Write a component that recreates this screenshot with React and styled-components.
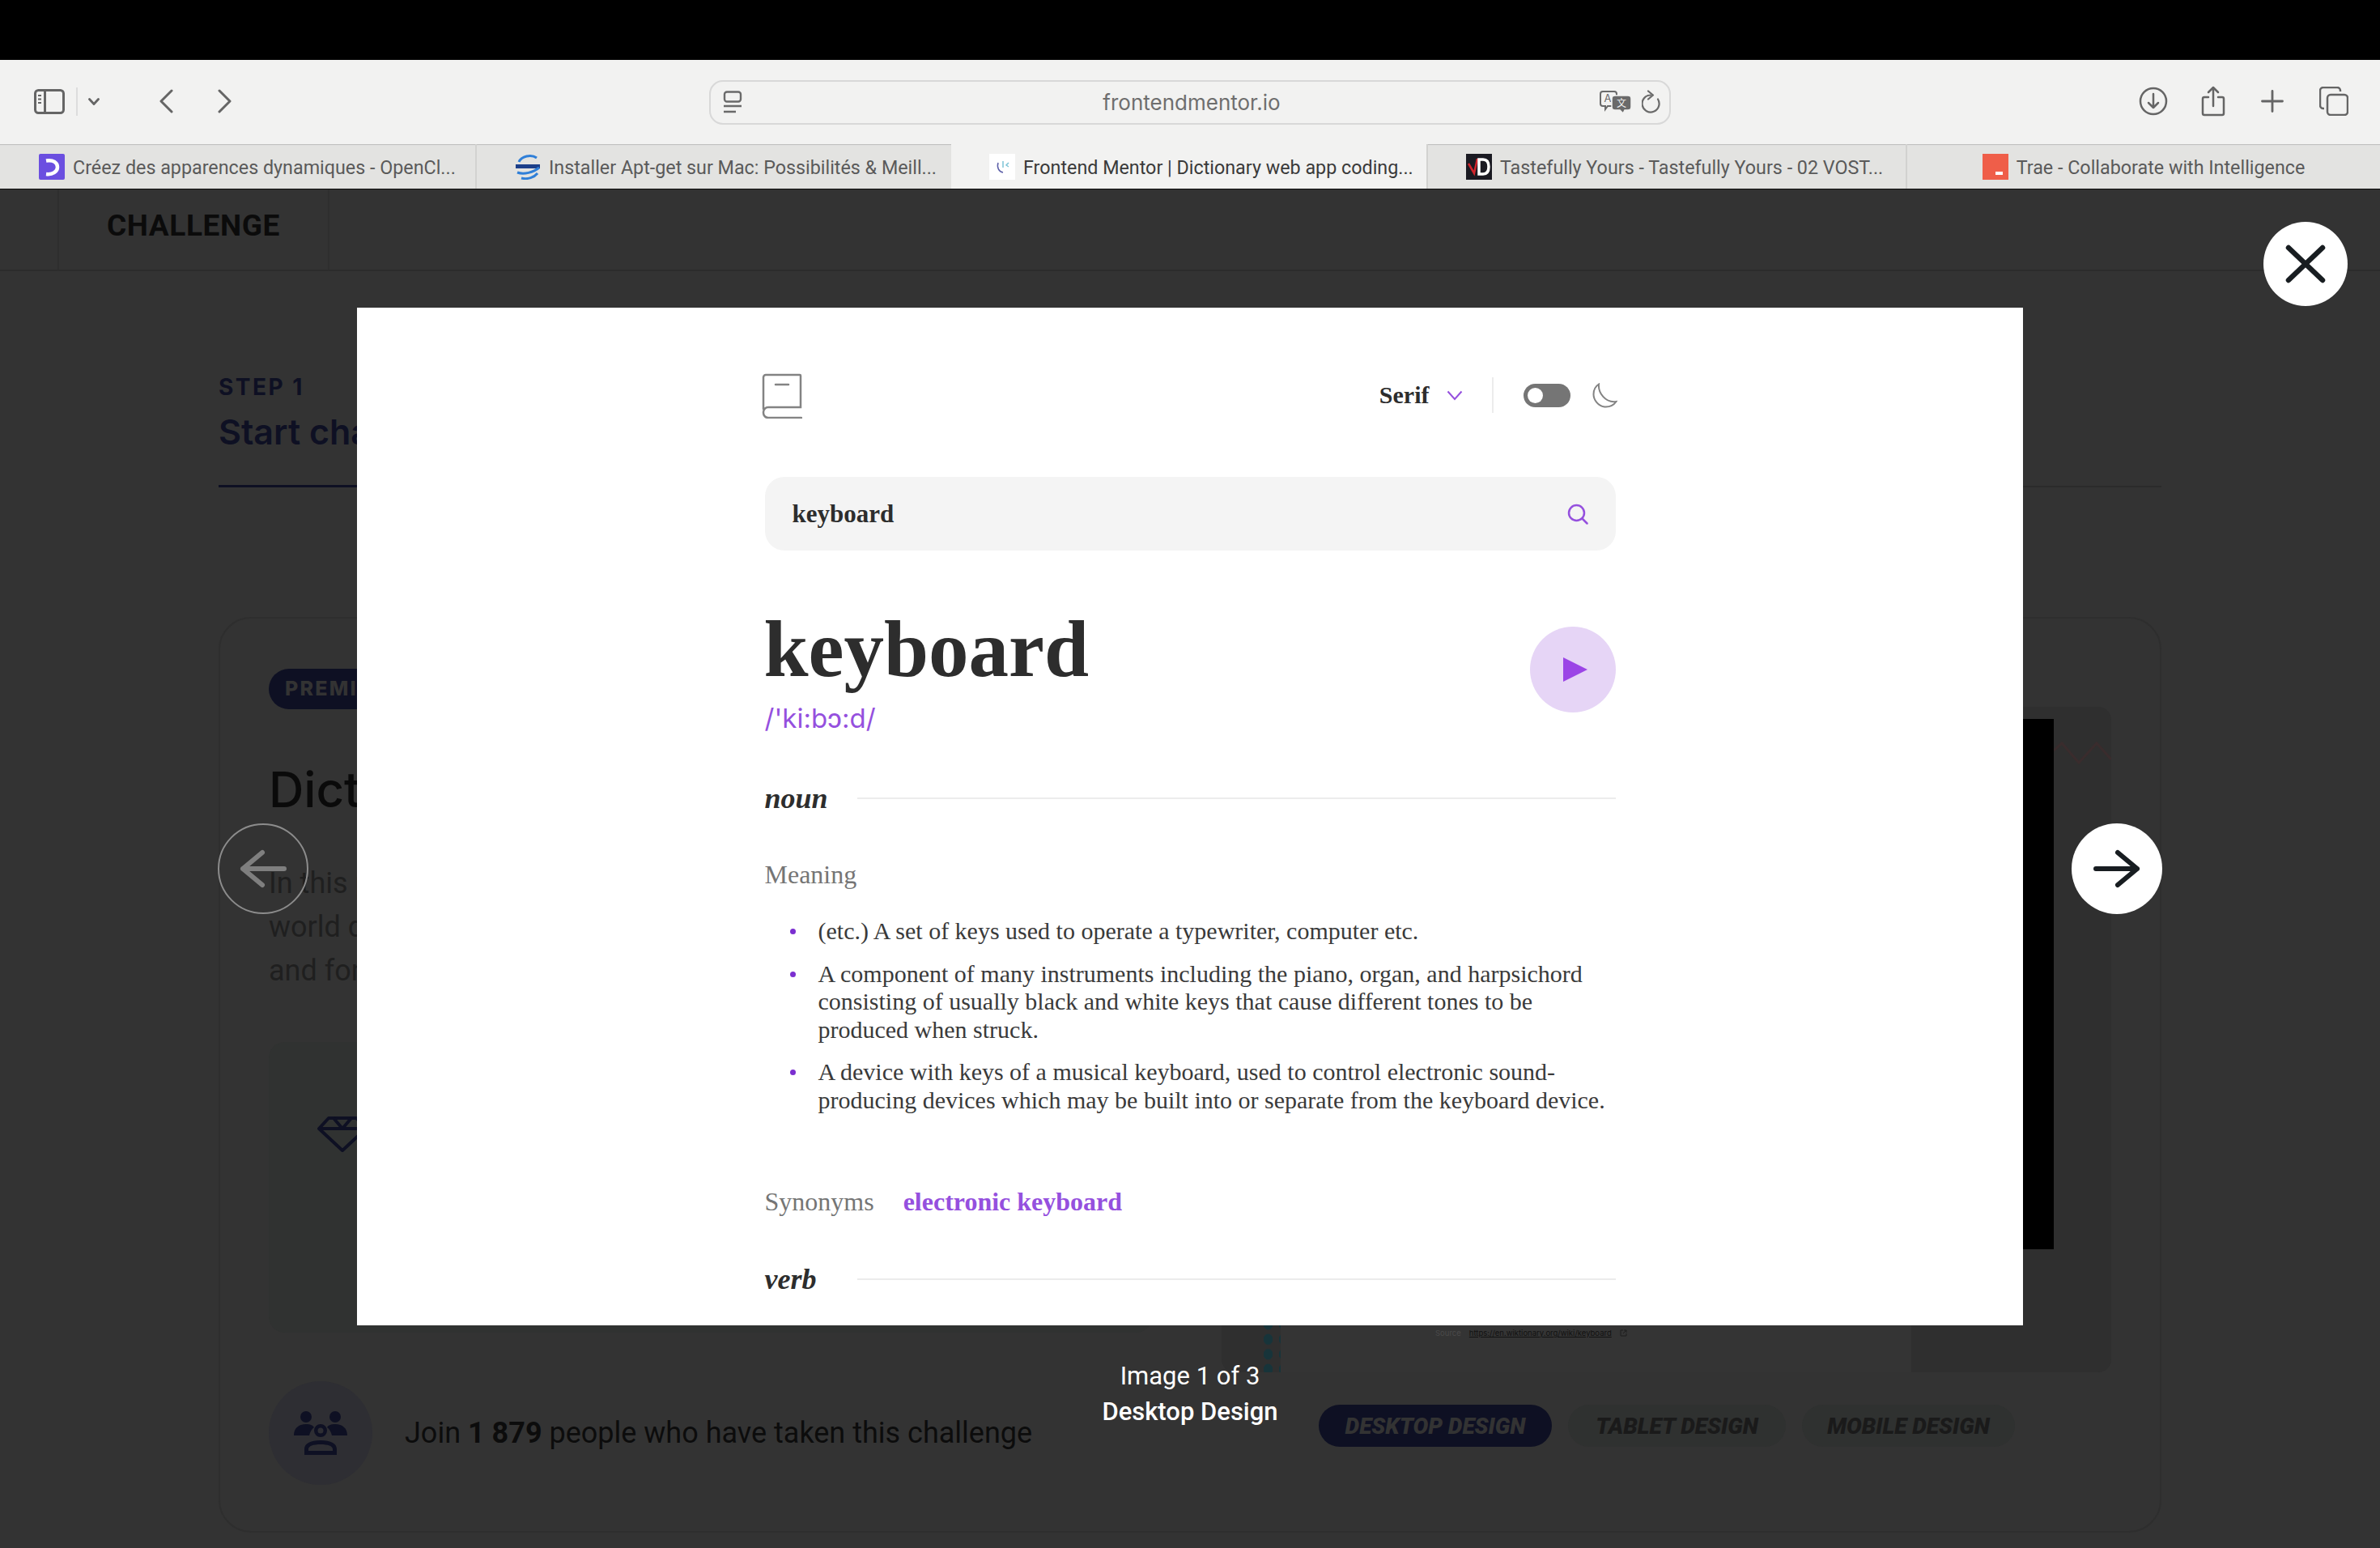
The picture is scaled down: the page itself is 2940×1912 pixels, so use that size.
import React from "react";
import styled, { createGlobalStyle } from "styled-components";

const GlobalStyle = createGlobalStyle`
  html, body {
    margin: 0;
    padding: 0;
    background: #333333;
    overflow: hidden;
  }
  * {
    box-sizing: border-box;
  }
`;

const SANS = `Inter, "Liberation Sans", sans-serif`;
const SERIF = `"Liberation Serif", serif`;
const PURPLE = "#9550de";
const NAVY = "#0e1023";

const Page = styled.div`
  width: 2940px;
  height: 1912px;
  display: flex;
  flex-direction: column;
  font-family: ${SANS};
`;

const TopStrip = styled.div`
  height: 74px;
  background: #000;
`;

const Toolbar = styled.header`
  height: 104px;
  background: #f2f2f1;
  display: grid;
  grid-template-columns: 876px 1188px 1fr;
  align-items: center;
`;

const ToolLeft = styled.div`
  display: flex;
  align-items: center;
  padding-left: 42px;
  margin-top: -2px;
  color: #656565;
`;

const Split = styled.span`
  width: 2px;
  height: 35px;
  background: #dddddd;
  margin: 0 13px 0 14px;
`;

const BackIcon = styled.svg`
  margin-left: ${(p) => p.$gap}px;
  display: block;
`;

const UrlBar = styled.div`
  height: 55px;
  border: 2px solid #d8d8d8;
  border-radius: 17px;
  display: flex;
  align-items: center;
  padding: 0 10px 0 15px;
  color: #6a6a6a;
`;

const UrlText = styled.span`
  flex: 1;
  text-align: center;
  font-size: 26px;
  color: #6e6e6e;
  padding-left: 51px;
`;

const ReloadIcon = styled.svg`
  margin-left: 12px;
`;

const ToolRight = styled.div`
  display: flex;
  align-items: center;
  justify-content: flex-end;
  gap: 44px;
  padding-right: 39px;
  margin-top: -2px;
  color: #656565;
  svg:first-child {
    margin-right: -3px;
  }
`;

const TabRow = styled.nav`
  height: 56px;
  display: grid;
  grid-template-columns: 587px 588px 587px 592px 586px;
  border-bottom: 1px solid #0c0c0c;
`;

const Tab = styled.div`
  background: ${(p) => (p.$active ? "#f2f2f1" : "#e3e3e1")};
  box-shadow: ${(p) => (p.$active ? "none" : "inset 0 2px 1px -1px #bdbdbd")};
  border-left: ${(p) => (p.$first || p.$active ? "none" : "2px solid #d2d2d0")};
  display: flex;
  align-items: center;
  justify-content: ${(p) => (p.$center ? "center" : "flex-start")};
  gap: 10px;
  padding-left: ${(p) => (p.$center ? 0 : p.$first ? 48 : 47)}px;
`;

const TabTitle = styled.span`
  font-family: Roboto, sans-serif;
  font-size: 23.3px;
  margin-top: 3px;
  white-space: nowrap;
  color: ${(p) => (p.$active ? "#3a3a3a" : "#5a5a5a")};
`;

const Stage = styled.main`
  position: relative;
  height: 1678px;
  background: #333333;
  overflow: hidden;
`;

const SiteNav = styled.div`
  height: 101px;
  padding-left: 71px;
  border-bottom: 2px solid #2c2c2c;
  display: flex;
`;

const NavCell = styled.div`
  width: 336px;
  border-left: 2px solid #2e2e2e;
  border-right: 2px solid #2e2e2e;
  padding: 0 0 10px 59px;
  display: flex;
  align-items: center;
  font-family: Roboto, sans-serif;
  font-size: 37px;
  font-weight: 700;
  letter-spacing: 0.6px;
  color: #0b0b0b;
`;

const StepBar = styled.div`
  margin: 0 270px;
  height: 267px;
  border-bottom: 2px solid #2b2b2b;
`;

const ActiveStep = styled.div`
  width: 560px;
  height: 267px;
  border-bottom: 3px solid ${NAVY};
  padding-top: 128px;
  color: ${NAVY};
`;

const StepLabel = styled.div`
  font-size: 28px;
  font-weight: 700;
  letter-spacing: 2.5px;
  line-height: 30px;
`;

const StepTitle = styled.div`
  font-size: 43px;
  font-weight: 600;
  line-height: 54px;
  margin-top: 13px;
  white-space: nowrap;
`;

const Card = styled.section`
  margin: 160px 270px 0;
  height: 1131px;
  border: 2px solid #2e2e2e;
  border-radius: 40px;
  padding: 62px 60px 0;
  display: grid;
  grid-template-columns: 1091px 1099px;
  column-gap: 86px;
`;

const CardLeft = styled.div`
  display: flex;
  flex-direction: column;
  align-items: flex-start;
`;

const Pill = styled.div`
  height: 50px;
  border-radius: 25px;
  background: ${NAVY};
  color: #333333;
  padding: 0 20px 2px;
  display: flex;
  align-items: center;
  font-size: 25px;
  font-weight: 800;
  letter-spacing: 2.2px;
`;

const CardTitle = styled.h2`
  margin: 63px 0 0;
  font-size: 60px;
  line-height: 72px;
  font-weight: 500;
  color: #0a0a0a;
`;

const CardText = styled.p`
  margin: 53px 0 0;
  font-family: Roboto, sans-serif;
  font-size: 36px;
  line-height: 54px;
  color: #1f1f1f;
  white-space: nowrap;
`;

const FeatureBox = styled.div`
  width: 100%;
  height: 359px;
  margin-top: 61px;
  border-radius: 20px;
  background: #303231;
  padding: 92px 0 0 60px;
  color: ${NAVY};
`;

const JoinRow = styled.div`
  display: flex;
  align-items: center;
  gap: 40px;
  margin-top: 60px;
`;

const JoinBadge = styled.div`
  width: 128px;
  height: 128px;
  border-radius: 50%;
  background: #2e2e33;
  color: ${NAVY};
  display: flex;
  align-items: center;
  justify-content: center;
`;

const JoinText = styled.div`
  font-family: Roboto, sans-serif;
  font-size: 36px;
  color: #0c0c0c;
  white-space: nowrap;
  b {
    font-weight: 700;
  }
`;

const CardRight = styled.div`
  padding-top: 47px;
  display: flex;
  flex-direction: column;
`;

const Mockup = styled.div`
  position: relative;
  height: 822px;
  background: #2f2f2f;
  border-radius: 16px;
  overflow: hidden;
`;

const MockScreen = styled.div`
  position: absolute;
  top: 15px;
  right: 71px;
  width: 800px;
  height: 655px;
  background: #000;
`;

const MockSheet = styled.div`
  position: absolute;
  left: 73px;
  bottom: 0;
  width: 779px;
  height: 150px;
  background: #343434;
`;

const MockSource = styled.div`
  position: absolute;
  left: 264px;
  bottom: 43px;
  display: flex;
  align-items: center;
  gap: 10px;
  font-size: 9.5px;
  color: #1f1f1f;
  white-space: nowrap;
  span {
    color: #4a4a4a;
  }
  u {
    color: #111;
  }
`;

const MockDots = styled.div`
  position: absolute;
  left: 48px;
  bottom: 0;
  width: 25px;
  height: 58px;
  background: radial-gradient(ellipse 6px 7px at 50% 50%, #17343a 92%, transparent 100%) 0 8px / 19px 18.5px;
`;

const MockWave = styled.svg`
  position: absolute;
  right: 0;
  top: 42px;
`;

const DesignTabs = styled.div`
  display: flex;
  justify-content: flex-end;
  gap: 20px;
  margin-top: 40px;
  padding-right: 119px;
`;

const DesignTab = styled.div`
  height: 52px;
  width: ${(p) => p.$w}px;
  border-radius: 26px;
  background: ${(p) => (p.$on ? NAVY : "#2f3130")};
  color: ${(p) => (p.$on ? "#333333" : "#1a1a1a")};
  display: flex;
  align-items: center;
  justify-content: center;
  font-family: Roboto, sans-serif;
  font-style: italic;
  font-weight: 900;
  font-size: 28px;
`;

const Overlay = styled.div`
  position: absolute;
  inset: 0;
  padding-top: 146px;
  display: flex;
  flex-direction: column;
  align-items: center;
`;

const Modal = styled.article`
  width: 2058px;
  height: 1257px;
  background: #fff;
  overflow: hidden;
  display: flex;
  justify-content: center;
`;

const Sheet = styled.div`
  width: 1051px;
  font-family: ${SERIF};
  color: #2d2d2d;
`;

const AppBar = styled.div`
  height: 135px;
  padding-top: 81px;
  display: flex;
  align-items: flex-start;
  justify-content: space-between;
  margin-left: -4px;
`;

const AppControls = styled.div`
  display: flex;
  align-items: center;
  height: 54px;
  margin-right: -2px;
`;

const FontName = styled.span`
  font-size: 30px;
  font-weight: 700;
  margin-right: 21px;
`;

const ControlLine = styled.span`
  width: 2px;
  height: 44px;
  background: #ececec;
  margin: 0 37px 0 36px;
`;

const Toggle = styled.div`
  width: 58px;
  height: 29px;
  border-radius: 15px;
  background: #757575;
  padding: 5px;
  margin-right: 27px;
  &::before {
    content: "";
    display: block;
    width: 19px;
    height: 19px;
    border-radius: 50%;
    background: #fff;
  }
`;

const SearchField = styled.div`
  margin-top: 74px;
  height: 91px;
  border-radius: 24px;
  background: #f4f4f4;
  padding: 0 34px 0 34px;
  display: flex;
  align-items: center;
  justify-content: space-between;
  font-size: 31px;
  font-weight: 700;
`;

const Headword = styled.div`
  display: flex;
  align-items: flex-start;
  justify-content: space-between;
  margin-top: 60px;
`;

const Word = styled.h1`
  margin: 0 0 0 -1px;
  font-size: 99px;
  line-height: 124px;
  font-weight: 700;
  color: #2d2d2d;
`;

const Phonetic = styled.div`
  font-family: ${SANS};
  font-size: 33px;
  line-height: 44px;
  color: ${PURPLE};
  margin-top: 1px;
`;

const PlayButton = styled.div`
  width: 106px;
  height: 106px;
  border-radius: 50%;
  background: #e6d5f6;
  display: flex;
  align-items: center;
  justify-content: center;
  margin-top: 34px;
  padding-left: 6px;
`;

const PartRow = styled.div`
  display: flex;
  align-items: center;
  gap: 35px;
  margin-top: ${(p) => p.$top}px;
  height: 44px;
`;

const PartName = styled.span`
  min-width: 79px;
  font-size: 36px;
  font-weight: 700;
  font-style: italic;
  color: #2d2d2d;
`;

const PartLine = styled.span`
  flex: 1;
  height: 2px;
  background: #ececec;
`;

const SectionLabel = styled.div`
  font-size: 32px;
  line-height: 40px;
  color: #757575;
  margin-top: 52px;
`;

const Defs = styled.ul`
  list-style: none;
  margin: 33px 0 0;
  padding: 0 0 0 66px;
`;

const Def = styled.li`
  position: relative;
  font-size: 30px;
  line-height: 34.5px;
  color: #3a3a3a;
  margin-bottom: 18px;
  &::before {
    content: "";
    position: absolute;
    left: -35px;
    top: 14px;
    width: 7px;
    height: 7px;
    border-radius: 50%;
    background: #7b2fd0;
  }
`;

const SynRow = styled.div`
  display: flex;
  align-items: center;
  gap: 36px;
  margin-top: 87.5px;
  font-size: 32px;
  line-height: 40px;
  color: #757575;
  b {
    color: ${PURPLE};
    font-weight: 700;
  }
`;

const Caption = styled.div`
  margin-top: 41px;
  text-align: center;
  color: #fff;
  font-family: Roboto, sans-serif;
  font-size: 31px;
  line-height: 44px;
`;

const CaptionStrong = styled.div`
  font-weight: 500;
`;

const RoundButton = styled.button`
  position: absolute;
  width: ${(p) => p.$size}px;
  height: ${(p) => p.$size}px;
  left: ${(p) => p.$x}px;
  top: ${(p) => p.$y}px;
  border-radius: 50%;
  padding: 0;
  display: flex;
  align-items: center;
  justify-content: center;
  background: ${(p) => (p.$dim ? "transparent" : "#fff")};
  border: ${(p) => (p.$dim ? "2px solid #8c8c8c" : "none")};
  color: ${(p) => (p.$dim ? "#7f7f7f" : "#181d21")};
`;

const TranslateGlyph = () => (
  <svg width="40" height="28" viewBox="0 0 40 28" fill="none">
    <path d="M4 1h14a3 3 0 0 1 3 3v12a3 3 0 0 1-3 3H10l-3 4v-4H4a3 3 0 0 1-3-3V4a3 3 0 0 1 3-3Z" stroke="currentColor" strokeWidth="2" />
    <text x="5.5" y="14" fontSize="13" fontFamily="Inter" fill="currentColor">A</text>
    <path d="M19 6h16a4 4 0 0 1 4 4v10a4 4 0 0 1-4 4h-4l-2 4-4-4h-6a4 4 0 0 1-4-4V10a4 4 0 0 1 4-4Z" fill="currentColor" stroke="#f2f2f1" strokeWidth="1.5" />
    <text x="21" y="20" fontSize="12" fontFamily="Noto Sans CJK SC" fill="#f2f2f1">文</text>
  </svg>
);

const Favicon = ({ kind }) => {
  if (kind === "oc")
    return (
      <svg width="32" height="32" viewBox="0 0 32 32" fill="none">
        <rect width="32" height="32" rx="2" fill="#6b4fe0" />
        <path d="M9 8.5c9-1.5 14 2.5 14 8s-6 9.5-14 8.5" stroke="#fff" strokeWidth="4.5" />
      </svg>
    );
  if (kind === "apt")
    return (
      <svg width="32" height="32" viewBox="0 0 32 32" fill="none">
        <path d="M5 10C8 3 20 0 27 5" stroke="#2f7fd8" strokeWidth="3" />
        <rect x="1" y="13" width="30" height="5" fill="#1c3f8a" />
        <path d="M3 23c8 3 20 0 27-6M8 30c8 2 16-1 20-6" stroke="#2f7fd8" strokeWidth="3" />
      </svg>
    );
  if (kind === "fem")
    return (
      <svg width="32" height="32" viewBox="0 0 32 32" fill="none">
        <rect width="32" height="32" fill="#fff" />
        <path d="M11 11c-2 6 1 11 6 12" stroke="#5c5fa8" strokeWidth="1.5" />
        <path d="M17 9v8M24 11l-3 3 3 2" stroke="#7ec4d6" strokeWidth="1.5" />
      </svg>
    );
  if (kind === "vd")
    return (
      <svg width="32" height="32" viewBox="0 0 32 32" fill="none">
        <rect width="32" height="32" fill="#1a1a22" />
        <path d="M3 12l7 12 4-18" stroke="#d0242c" strokeWidth="2.5" />
        <path d="M16 7h5c5 0 7 4 7 9s-2 9-7 9h-5Z" stroke="#fff" strokeWidth="3.5" />
      </svg>
    );
  return (
    <svg width="32" height="32" viewBox="0 0 32 32">
      <rect width="32" height="32" fill="#ef5e49" />
      <rect x="16" y="22" width="9" height="4" fill="#fff" />
    </svg>
  );
};

const tabs = [
  { kind: "oc", title: "Créez des apparences dynamiques - OpenCl..." },
  { kind: "apt", title: "Installer Apt-get sur Mac: Possibilités & Meill..." },
  { kind: "fem", title: "Frontend Mentor | Dictionary web app coding...", active: true },
  { kind: "vd", title: "Tastefully Yours - Tastefully Yours - 02 VOST..." },
  { kind: "trae", title: "Trae - Collaborate with Intelligence", center: true },
];

export default function App() {
  return (
    <Page>
      <GlobalStyle />
      <TopStrip />
      <Toolbar>
        <ToolLeft>
          <svg width="38" height="31" viewBox="0 0 38 31" fill="none" stroke="currentColor" strokeWidth="3">
            <rect x="1.5" y="1.5" width="35" height="28" rx="4" />
            <path d="M13.5 2v27" />
            <path d="M5 8h4M5 12.5h4M5 17h4" strokeWidth="2" />
          </svg>
          <Split />
          <svg width="14" height="9" viewBox="0 0 14 9" fill="none" stroke="currentColor" strokeWidth="2.8" strokeLinecap="round">
            <path d="M1.5 1.5 7 7.5l5.5-6" />
          </svg>
          <BackIcon $gap={74} width="17" height="30" viewBox="0 0 17 30" fill="none" stroke="currentColor" strokeWidth="3" strokeLinecap="round" strokeLinejoin="round">
            <path d="M15 2 2 15l13 13" />
          </BackIcon>
          <BackIcon $gap={55} width="17" height="30" viewBox="0 0 17 30" fill="none" stroke="currentColor" strokeWidth="3" strokeLinecap="round" strokeLinejoin="round">
            <path d="m2 2 13 13L2 28" />
          </BackIcon>
        </ToolLeft>
        <UrlBar>
          <svg width="24" height="28" viewBox="0 0 24 28" fill="none" stroke="currentColor" strokeWidth="2.4">
            <rect x="2" y="1.5" width="20" height="12" rx="3" />
            <path d="M1 19h22M1 26h15" />
          </svg>
          <UrlText>frontendmentor.io</UrlText>
          <TranslateGlyph />
          <ReloadIcon width="24" height="30" viewBox="0 0 24 30" fill="none" stroke="currentColor" strokeWidth="2.2" strokeLinecap="round" strokeLinejoin="round">
            <path d="M20 11.5A10.5 10.5 0 1 1 11 6.5" />
            <path d="M8 1.5l6 5-6 5" />
          </ReloadIcon>
        </UrlBar>
        <ToolRight>
          <svg width="36" height="36" viewBox="0 0 36 36" fill="none" stroke="currentColor" strokeWidth="2.5" strokeLinecap="round" strokeLinejoin="round">
            <circle cx="18" cy="18" r="16" />
            <path d="M18 9v17M12 20l6 6 6-6" />
          </svg>
          <svg width="30" height="38" viewBox="0 0 30 38" fill="none" stroke="currentColor" strokeWidth="2.5" strokeLinecap="round" strokeLinejoin="round">
            <path d="M9 14H4a2 2 0 0 0-2 2v18a2 2 0 0 0 2 2h22a2 2 0 0 0 2-2V16a2 2 0 0 0-2-2h-5" />
            <path d="M15 25V2M9 8l6-6 6 6" />
          </svg>
          <svg width="28" height="28" viewBox="0 0 28 28" fill="none" stroke="currentColor" strokeWidth="2.8" strokeLinecap="round">
            <path d="M14 1.5v25M1.5 14h25" />
          </svg>
          <svg width="36" height="36" viewBox="0 0 36 36" fill="none" stroke="currentColor" strokeWidth="2.5">
            <rect x="10" y="10" width="25" height="25" rx="4" />
            <path d="M6 27H5a4 4 0 0 1-4-4V5a4 4 0 0 1 4-4h17a4 4 0 0 1 4 4v1" />
          </svg>
        </ToolRight>
      </Toolbar>
      <TabRow>
        {tabs.map((t, i) => (
          <Tab key={t.kind} $active={t.active} $first={i === 0} $center={t.center}>
            <Favicon kind={t.kind} />
            <TabTitle $active={t.active}>{t.title}</TabTitle>
          </Tab>
        ))}
      </TabRow>
      <Stage>
        <SiteNav>
          <NavCell>CHALLENGE</NavCell>
        </SiteNav>
        <StepBar>
          <ActiveStep>
            <StepLabel>STEP 1</StepLabel>
            <StepTitle>Start challenge</StepTitle>
          </ActiveStep>
        </StepBar>
        <Card>
          <CardLeft>
            <Pill>PREMIUM</Pill>
            <CardTitle>Dictionary web app</CardTitle>
            <CardText>
              In this project, you'll integrate with a free API
              <br />
              world dictionary app with a theme switcher
              <br />
              and font selection.
            </CardText>
            <FeatureBox>
              <svg width="62" height="44" viewBox="0 0 62 44" fill="none" stroke="currentColor" strokeWidth="4" strokeLinejoin="round">
                <path d="M14 2h34l12 13-29 27L2 15 14 2Z" />
                <path d="M2 15h58M20 2l11 13L42 2" />
              </svg>
            </FeatureBox>
            <JoinRow>
              <JoinBadge>
                <svg width="66" height="54" viewBox="0 0 66 54" fill="currentColor">
                  <circle cx="15" cy="7" r="7" />
                  <circle cx="51" cy="7" r="7" />
                  <path d="M0 30c0-9 6-14 15-14 5 0 8 1 10 4-3 2-5 6-6 10H0Z" />
                  <path d="M66 30c0-9-6-14-15-14-5 0-8 1-10 4 3 2 5 6 6 10h19Z" />
                  <path fillRule="evenodd" d="M33 16a8 8 0 1 1 0 16 8 8 0 0 1 0-16Zm0 4.5a3.5 3.5 0 1 0 0 7 3.5 3.5 0 0 0 0-7Z" />
                  <path fillRule="evenodd" d="M13 54V47c0-7 7-11 20-11s20 4 20 11v7H13Zm5-5h30v-2c0-4-6-6-15-6s-15 2-15 6v2Z" />
                </svg>
              </JoinBadge>
              <JoinText>
                Join <b>1 879</b> people who have taken this challenge
              </JoinText>
            </JoinRow>
          </CardLeft>
          <CardRight>
            <Mockup>
              <MockSheet />
              <MockScreen />
              <MockDots />
              <MockSource>
                <span>Source</span>
                <u>https://en.wiktionary.org/wiki/keyboard</u>
                <svg width="9" height="9" viewBox="0 0 9 9" fill="none" stroke="#1c1c1c" strokeWidth="1">
                  <path d="M4 1H1v7h7V5M4 5l4-4M5 1h3v3" />
                </svg>
              </MockSource>
              <MockWave width="71" height="30" viewBox="0 0 71 30" fill="none" stroke="#3a2c2d" strokeWidth="3">
                <path d="M0 12 10 3l21 24L53 3l18 20" />
              </MockWave>
            </Mockup>
            <DesignTabs>
              <DesignTab $on $w={288}>DESKTOP DESIGN</DesignTab>
              <DesignTab $w={269}>TABLET DESIGN</DesignTab>
              <DesignTab $w={263}>MOBILE DESIGN</DesignTab>
            </DesignTabs>
          </CardRight>
        </Card>

        <Overlay>
          <Modal>
            <Sheet>
              <AppBar>
                <svg width="50" height="56" viewBox="0 0 50 56" fill="none" stroke="#838383" strokeWidth="2.5" strokeLinecap="round">
                  <path d="M2 44V5a3 3 0 0 1 3-3h42a1 1 0 0 1 1 1v39H8a6 6 0 0 0-6 6v1a6 6 0 0 0 6 6h41" />
                  <path d="M17 14h16" />
                </svg>
                <AppControls>
                  <FontName>Serif</FontName>
                  <svg width="20" height="13" viewBox="0 0 20 13" fill="none" stroke={PURPLE} strokeWidth="2">
                    <path d="M1.5 1.5 10 11l8.5-9.5" />
                  </svg>
                  <ControlLine />
                  <Toggle />
                  <svg width="31" height="31" viewBox="0 0 31 31" fill="none" stroke="#838383" strokeWidth="2">
                    <path d="M8 1.5C7 12 16 25 29.5 23 26 28 21 30 15 29.5 7 28 1.5 21 1.5 14 1.5 9 4 4 8 1.5Z" />
                  </svg>
                </AppControls>
              </AppBar>
              <SearchField>
                keyboard
                <svg width="26" height="26" viewBox="0 0 26 26" fill="none" stroke={PURPLE} strokeWidth="2.5" strokeLinecap="round">
                  <circle cx="11.5" cy="11.5" r="9.5" />
                  <path d="m19 19 5.5 5.5" />
                </svg>
              </SearchField>
              <Headword>
                <div>
                  <Word>keyboard</Word>
                  <Phonetic>/'ki:bɔ:d/</Phonetic>
                </div>
                <PlayButton>
                  <svg width="30" height="30" viewBox="0 0 30 30" fill="#9b45e6">
                    <path d="M0 0 30 15 0 30Z" />
                  </svg>
                </PlayButton>
              </Headword>
              <PartRow $top={55}>
                <PartName>noun</PartName>
                <PartLine />
              </PartRow>
              <SectionLabel>Meaning</SectionLabel>
              <Defs>
                <Def>(etc.) A set of keys used to operate a typewriter, computer etc.</Def>
                <Def>A component of many instruments including the piano, organ, and harpsichord consisting of usually black and white keys that cause different tones to be produced when struck.</Def>
                <Def>A device with keys of a musical keyboard, used to control electronic sound-producing devices which may be built into or separate from the keyboard device.</Def>
              </Defs>
              <SynRow>
                Synonyms <b>electronic keyboard</b>
              </SynRow>
              <PartRow $top={54}>
                <PartName>verb</PartName>
                <PartLine />
              </PartRow>
            </Sheet>
          </Modal>
          <Caption>
            Image 1 of 3
            <CaptionStrong>Desktop Design</CaptionStrong>
          </Caption>
        </Overlay>

        <RoundButton $size={104} $x={2796} $y={40}>
          <svg width="50" height="48" viewBox="0 0 50 48" fill="none" stroke="currentColor" strokeWidth="6.5" strokeLinecap="round">
            <path d="M4 4l42 40M46 4 4 44" />
          </svg>
        </RoundButton>
        <RoundButton $dim $size={112} $x={269} $y={783}>
          <svg width="58" height="48" viewBox="0 0 58 48" fill="none" stroke="currentColor" strokeWidth="6" strokeLinecap="round" strokeLinejoin="round">
            <path d="M55 24H4M28 4 4 24l24 20" />
          </svg>
        </RoundButton>
        <RoundButton $size={112} $x={2559} $y={783}>
          <svg width="58" height="48" viewBox="0 0 58 48" fill="none" stroke="currentColor" strokeWidth="6" strokeLinecap="round" strokeLinejoin="round">
            <path d="M3 24h51M30 4l24 20-24 20" />
          </svg>
        </RoundButton>
      </Stage>
    </Page>
  );
}
